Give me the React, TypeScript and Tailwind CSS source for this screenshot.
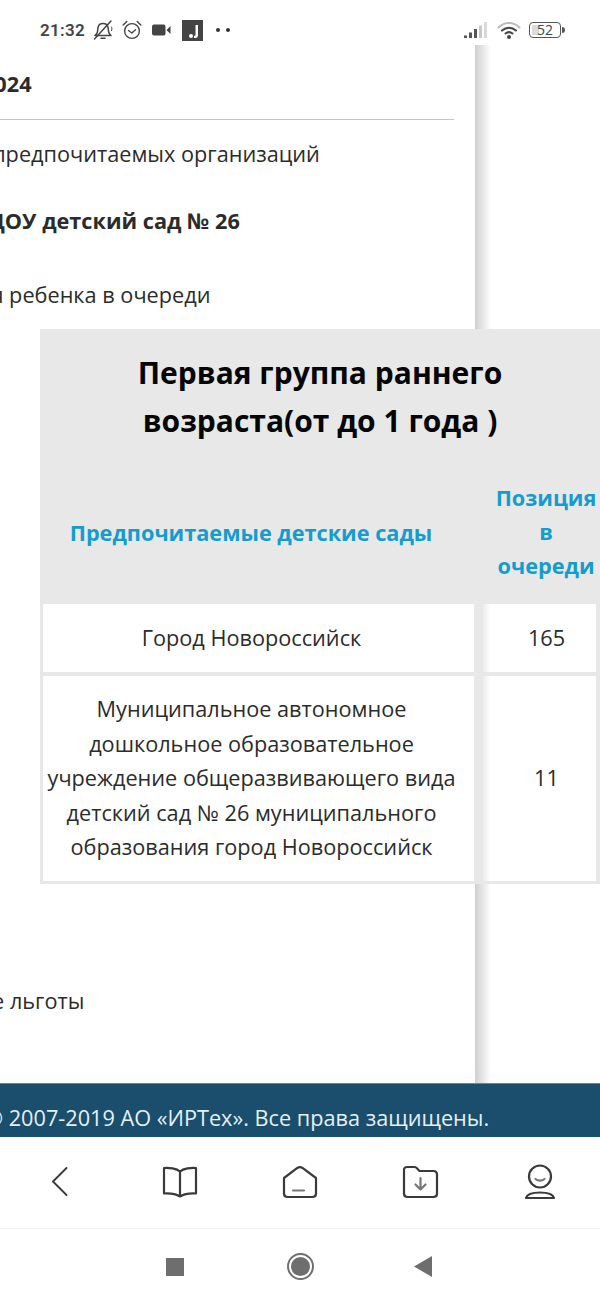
const Bell = () => (
  <svg width="22" height="22" viewBox="0 0 22 22" fill="none" stroke="#444" strokeWidth="1.5" strokeLinecap="round" strokeLinejoin="round">
    <path d="M3 16.500c1.600-1 2.400-2.200 2.600-4.400l.3-3c.3-2.700 2.400-4.600 5.100-4.600 2.800 0 4.900 1.900 5.200 4.600l.3 3c.2 2.200 1 3.400 2.500 4.400z" />
    <path d="M9 19.200h4" />
    <path d="M2.500 20 19 2" />
    <path d="M19.500 8c.6 1.200.6 2.500 0 3.700" strokeWidth="1" />
  </svg>
);

const Alarm = () => (
  <svg width="20" height="20" viewBox="0 0 20 20" fill="none" stroke="#444" strokeWidth="1.4" strokeLinecap="round" strokeLinejoin="round">
    <circle cx="10" cy="11" r="7.400" />
    <path d="M6.500 10.500 9.800 13 13.500 9.800" />
    <path d="M1.200 5 4.800 1.500M18.800 5l-3.600-3.500" />
  </svg>
);

const Camera = () => (
  <svg width="19" height="12" viewBox="0 0 19 12" fill="#444">
    <rect x="0" y="0.500" width="13.500" height="11" rx="2" />
    <path d="M14.500 6 18.500 2v8z" />
  </svg>
);

const Music = () => (
  <svg width="21" height="21" viewBox="0 0 21 21">
    <rect width="21" height="21" fill="#444" />
    <path d="M13.500 5H16v10.500c0 1.500-1 2.500-2.500 2.500H12v-2.200h.8c.5 0 .7-.3.7-.8z" fill="#fff" />
    <circle cx="9" cy="16" r="2" fill="#fff" />
  </svg>
);

const Signal = () => (
  <svg width="24" height="18" viewBox="0 0 24 18">
    <rect x="0" y="14.500" width="3" height="2.500" fill="#555" />
    <rect x="5" y="11.500" width="3" height="5.500" fill="#555" />
    <rect x="10" y="8" width="3" height="9" fill="#555" />
    <rect x="15" y="4.500" width="3" height="12.500" fill="#c9c9c9" />
    <rect x="20" y="1" width="3" height="16" fill="#d8d8d8" />
  </svg>
);

const Wifi = () => (
  <svg width="24" height="20" viewBox="0 0 24 20" fill="none" strokeLinecap="round">
    <path d="M1.500 7.500C7.500 1.500 16.500 1.500 22.500 7.500" stroke="#bbb" strokeWidth="2" />
    <path d="M5 10.500c4.200-3.800 9.800-3.800 14 0" stroke="#444" strokeWidth="2" />
    <path d="M8.500 13.500c2.200-1.700 4.800-1.700 7 0" stroke="#444" strokeWidth="2" />
    <circle cx="12" cy="17" r="2" fill="#444" />
  </svg>
);

const Battery = () => (
  <div className="flex items-center">
    <div className="relative flex h-[16px] w-[32px] items-center justify-center overflow-hidden rounded-[4px] border-[1.5px] border-[#555]">
      <div className="absolute inset-y-[2px] left-[2px] w-[7px] bg-[#dcdcdc]" />
      <span className="relative text-[14px] leading-none text-[#444]">52</span>
    </div>
    <div className="ml-[1px] h-[6px] w-[3px] rounded-r-sm bg-[#555]" />
  </div>
);

const NavBack = () => (
  <svg width="18" height="32" viewBox="0 0 18 32" fill="none" stroke="#3a3a3a" strokeWidth="1.900" strokeLinecap="round" strokeLinejoin="round">
    <path d="M15.500 2 2 15.500 15.500 29" />
  </svg>
);

const NavBook = () => (
  <svg width="36" height="34" viewBox="0 0 36 34" fill="none" stroke="#3a3a3a" strokeWidth="2.200" strokeLinejoin="round">
    <path d="M18 6.500C14.500 3.500 7 2.500 2 3v25.500c5-.3 12 .5 16 3 4-2.500 11-3.300 16-3V3c-5-.5-12.500.5-16 3.500z" />
    <path d="M18 6.500v25" />
  </svg>
);

const NavHome = () => (
  <svg width="36" height="34" viewBox="0 0 36 34" fill="none" stroke="#3a3a3a" strokeWidth="2.200" strokeLinecap="round" strokeLinejoin="round">
    <path d="M2 13 15 3.200c1.800-1.200 4-1.200 5.800 0L34 13v15.500c0 2-1.500 3.500-3.500 3.500h-25C3.500 32 2 30.500 2 28.500z" />
    <path d="M11 25.500h11" stroke="#777" />
  </svg>
);

const NavFolder = () => (
  <svg width="37" height="34" viewBox="0 0 37 34" fill="none" stroke="#3a3a3a" strokeWidth="2.200" strokeLinecap="round" strokeLinejoin="round">
    <path d="M2 5c0-1.800 1.200-3 3-3h7.500c1 0 1.800.4 2.400 1.200L17.500 6H31.500c2 0 3.500 1.500 3.500 3.500V28.500c0 2-1.500 3.500-3.500 3.500h-26C3.500 32 2 30.500 2 28.500z" />
    <path d="M18.500 13v11M13.500 19.500l5 5 5-5" stroke="#777" />
  </svg>
);

const NavUser = () => (
  <svg width="32" height="36" viewBox="0 0 32 36" fill="none" stroke="#3a3a3a" strokeWidth="2.200" strokeLinecap="round" strokeLinejoin="round">
    <circle cx="16" cy="12.500" r="11" />
    <path d="M11.500 15c2.500 2.200 6.500 2.200 9 0" stroke="#777" />
    <path d="M2 34c1-3.800 7-5.500 14-5.500S29 30.200 30 34z" />
  </svg>
);

const Row = ({ children, value, tall }: { children: React.ReactNode; value: string; tall?: boolean }) => (
  <div className={`flex ${tall ? "h-[205px]" : "h-[68px]"}`}>
    <div className="flex w-[431px] items-center justify-center bg-white pl-[3px] pr-[17px] text-center">{children}</div>
    <div className="ml-[9px] flex w-[113px] items-center justify-center bg-[linear-gradient(to_right,#ececec,#ffffff_7px)] pl-[14px]">{value}</div>
  </div>
);

export default function App() {
  return (
    <div className="flex h-[1299px] w-[600px] flex-col overflow-hidden bg-white font-['Open_Sans',sans-serif] text-[21.700px] leading-[34.500px] text-[#2b2b2b]">
      <div className="flex h-[45px] shrink-0 items-center pl-[40px] pr-[35px] pt-[15px]">
        <span className="font-['Roboto',sans-serif] text-[17px] font-semibold tracking-[0.300px] text-[#444]">21:32</span>
        <div className="ml-[7px] flex items-center gap-[8px]">
          <Bell />
          <Alarm />
          <div className="ml-[2px]"><Camera /></div>
          <div className="ml-[3px]"><Music /></div>
          <div className="ml-[5px] flex gap-[6px]">
            <span className="h-[4px] w-[4px] rounded-full bg-[#333]" />
            <span className="h-[4px] w-[4px] rounded-full bg-[#333]" />
          </div>
        </div>
        <div className="ml-auto flex items-center">
          <Signal />
          <div className="ml-[9px]"><Wifi /></div>
          <div className="ml-[8px]"><Battery /></div>
        </div>
      </div>

      <main className="relative flex h-[1038px] shrink-0 overflow-hidden">
        <div className="w-[475px] shrink-0 overflow-hidden">
          <div className="w-[454px]">
            <div className="mt-[22px] -ml-[80px] whitespace-nowrap font-bold">20.11.2024</div>
            <div className="mt-[17px] h-[1px] bg-[#c4c4c4]" />
            <div className="mt-[17px] -ml-[89px] whitespace-nowrap">Список предпочитаемых организаций</div>
            <div className="mt-[33px] -ml-[46px] whitespace-nowrap font-bold">МБДОУ детский сад № 26</div>
            <div className="mt-[39px] -ml-[89px] whitespace-nowrap">Позиция ребенка в очереди</div>
            <div className="mt-[672px] -ml-[70px] whitespace-nowrap">Другие льготы</div>
          </div>
        </div>
        <div className="w-[16px] bg-[linear-gradient(to_right,#cfcfcf,#ffffff)]" />

        <section className="absolute left-[40px] top-[284px] w-[560px] bg-[#e8e8e8] pb-[3px] pl-[3px]">
          <h2 className="pt-[20px] pr-[3px] text-center text-[30px] font-bold leading-[48px] text-[#050505]">
            Первая группа раннего<br />возраста(от до 1 года )
          </h2>
          <div className="mt-[35px] flex h-[124px] font-bold text-[#159ccd]">
            <div className="flex w-[431px] items-center justify-center pb-[18px] pr-[15px]">Предпочитаемые детские сады</div>
            <div className="ml-[9px] flex w-[113px] items-start justify-center pl-[13px] pt-[1px] text-center leading-[34px]">Позиция<br />в<br />очереди</div>
          </div>
          <Row value="165">Город Новороссийск</Row>
          <div className="h-[4px]" />
          <Row value="11" tall>
            <span>Муниципальное автономное дошкольное образовательное учреждение общеразвивающего вида детский сад № 26 муниципального образования город Новороссийск</span>
          </Row>
        </section>
      </main>

      <footer className="flex h-[54px] shrink-0 items-center border-t border-[#5f8aa3] bg-[#1b4d6c] pt-[16px] whitespace-nowrap text-[#e3f1f8]">
        <span className="-ml-[15px]">© 2007-2019 АО «ИРТех». Все права защищены.</span>
      </footer>

      <nav className="flex h-[92px] shrink-0 items-center border-b border-[#f0f0f0] pl-[51px] pb-[1px]">
        <NavBack />
        <div className="ml-[93px]"><NavBook /></div>
        <div className="ml-[84px]"><NavHome /></div>
        <div className="ml-[84px]"><NavFolder /></div>
        <div className="ml-[85px]"><NavUser /></div>
      </nav>

      <div className="flex flex-1 items-center pl-[166px] pt-[5px]">
        <div className="h-[18px] w-[18px] bg-[#6e6e6e]" />
        <div className="ml-[103px] flex h-[27px] w-[27px] items-center justify-center rounded-full border-2 border-[#6e6e6e]">
          <div className="h-[19px] w-[19px] rounded-full bg-[#6e6e6e]" />
        </div>
        <svg className="ml-[100px]" width="18" height="21" viewBox="0 0 18 21">
          <path d="M18 0v21L0 10.500z" fill="#6e6e6e" />
        </svg>
      </div>
    </div>
  );
}
